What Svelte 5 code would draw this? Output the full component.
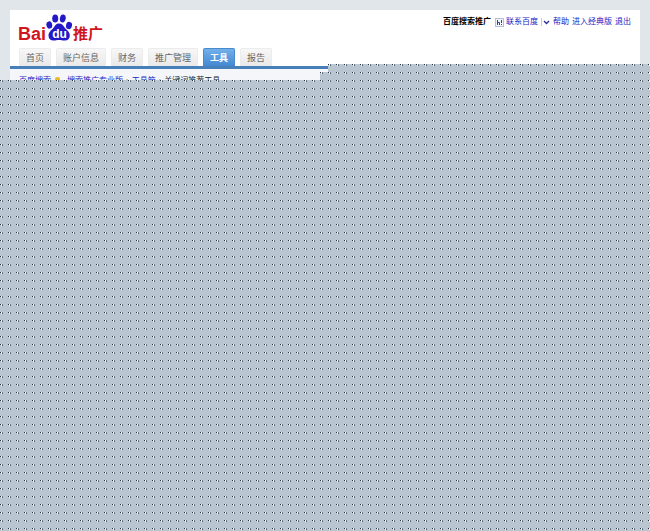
<script>
  const tabs = ['首页', '账户信息', '财务', '推广管理', '工具', '报告'];
  let active = $state('工具');
</script>

<div class="page">
  <div class="sheet">
    <header>
      <a class="logo" href="#home" aria-label="Baidu 推广">
        <span class="bai">Bai</span>
        <span class="paw">
          <svg viewBox="0 0 27 28" width="27" height="28" aria-hidden="true">
            <g fill="#2319c8">
              <ellipse cx="3.3" cy="11" rx="2.9" ry="3.7" transform="rotate(-12 3.3 11)" />
              <ellipse cx="9.2" cy="4.4" rx="3" ry="4" />
              <ellipse cx="16.8" cy="4.5" rx="2.9" ry="4" transform="rotate(12 16.8 4.5)" />
              <ellipse cx="23" cy="11.5" rx="3" ry="3.7" transform="rotate(12 23 11.5)" />
              <path d="M13 9.500c3 0 4.300 2.100 5.800 4.200 2 2.500 5 4 5 7.800 0 3.500-2.300 5.200-5.300 5-2.300-.1-3.300-.6-5.500-.6s-3.200.6-5.500.6c-3 0-5-1.600-5-5 0-3.600 3-5.300 5-7.800 1.500-2 2.600-4.200 5.500-4.200z" />
            </g>
          </svg>
          <span class="du">du</span>
        </span>
        <span class="tui">推广</span>
      </a>
      <div class="links">
        <b>百度搜索推广</b>
        <a class="contact" href="#contact">
          <svg viewBox="0 0 9 9" width="9" height="9" aria-hidden="true">
            <rect x=".5" y=".5" width="8" height="8" fill="#f2f5fc" stroke="#b5bed8" />
            <path d="M2.500 2v5M2.500 4.500h2v2.500M6.500 2v3M6.500 6v1" fill="none" stroke="#3d3d99" />
          </svg>
          联系百度
        </a>
        <button class="more" aria-label="更多">
          <svg viewBox="0 0 9 8" width="9" height="8" aria-hidden="true">
            <path d="M.5 0v8" stroke="#c5cbe0" />
            <path d="M3 3l2.500 2.500L8 3" fill="none" stroke="#2a2a9a" stroke-width="1.300" />
          </svg>
        </button>
        <a href="#help">帮助</a>
        <a href="#classic">进入经典版</a>
        <a href="#exit">退出</a>
      </div>
    </header>

    <nav class="tabs">
      {#each tabs as tab}
        <button class:active={tab === active} onclick={() => (active = tab)}>{tab}</button>
      {/each}
    </nav>

    <div class="crumbs">
      <a href="#baidu">百度搜索</a>
      <i></i>
      <a href="#pro">搜索推广专业版</a>
      <span>›</span>
      <a href="#tools">工具箱</a>
      <span>›</span>
      <span class="here">关键词推荐工具</span>
    </div>
  </div>
  <div class="veil"></div>
</div>

<style>
  :global(body) {
    margin: 0;
    background: #e0e6e9;
  }
  .page {
    position: relative;
    min-height: 100vh;
    box-sizing: border-box;
    padding: 10px 10px 0;
    overflow: hidden;
    font: 8px/12px "Liberation Sans", "Noto Sans CJK SC", sans-serif;
  }
  .sheet {
    background: #fff;
  }
  a {
    color: #1c1cc4;
    text-decoration: none;
  }
  button {
    border: 0;
    padding: 0;
    background: none;
    font: inherit;
  }
  svg {
    display: block;
  }
  header {
    display: flex;
    justify-content: space-between;
    align-items: flex-start;
    height: 38px;
    padding: 0 9px 0 8px;
  }
  .logo {
    display: flex;
    align-items: flex-end;
    padding-top: 4px;
    color: #d0161d;
    font-weight: bold;
  }
  .bai {
    font-size: 18px;
    line-height: 16px;
  }
  .paw {
    position: relative;
  }
  .du {
    position: absolute;
    left: 0;
    right: 0;
    bottom: 1px;
    color: #fff;
    font-size: 12px;
    line-height: 14px;
    text-align: center;
  }
  .tui {
    font-size: 15px;
    line-height: 16px;
  }
  .links {
    display: flex;
    align-items: center;
    gap: 3px;
    padding-top: 6px;
  }
  .links b {
    margin-right: 1px;
    color: #000;
  }
  .contact {
    display: flex;
    align-items: center;
    gap: 2px;
  }
  .tabs {
    display: flex;
    gap: 5px;
    padding: 0 9px;
    border-bottom: 3px solid #477fb9;
  }
  .tabs button {
    height: 18px;
    padding: 0 6px;
    border: 1px solid #ececec;
    border-bottom: 0;
    border-radius: 2px 2px 0 0;
    background: linear-gradient(#f7f7f7, #e9e9e9);
    color: #666;
    font-size: 9px;
    line-height: 18px;
  }
  .tabs .active {
    border-color: #4b89cd;
    background: linear-gradient(#72b0ea, #4388d2);
    color: #fff;
    font-weight: bold;
  }
  .crumbs {
    display: flex;
    align-items: flex-start;
    gap: 3px;
    padding: 6px 9px;
    background: #f4f6fa;
  }
  .crumbs i {
    width: 5px;
    height: 6px;
    margin: 2px 4px 0 1px;
    border-radius: 2px;
    background: #e9bd24;
  }
  .crumbs span {
    color: #777;
  }
  .crumbs .here {
    color: #222;
  }
  .veil {
    --dot: #26323c;
    --glint: #f4f8fb;
    position: absolute;
    inset: 64px 0 0;
    background:
      conic-gradient(from 0deg at 1px 1px, transparent 75%, var(--dot) 0) 0 0 / 8px 8px,
      conic-gradient(from 0deg at 1px 1px, transparent 75%, var(--glint) 0) 1px 0 / 8px 8px,
      conic-gradient(from 0deg at 1px 1px, transparent 75%, #6f7f8d 0) 2px 0 / 8px 8px,
      conic-gradient(from 0deg at 1px 1px, transparent 75%, var(--glint) 0) 1px 1px / 8px 8px,
      conic-gradient(from 0deg at 1px 1px, transparent 75%, #4a5967 0) 2px 1px / 8px 8px,
      #b9c6d2;
    clip-path: polygon(0 16px, 320px 16px, 320px 8px, 328px 8px, 328px 0, 100% 0, 100% 100%, 0 100%);
  }
</style>
